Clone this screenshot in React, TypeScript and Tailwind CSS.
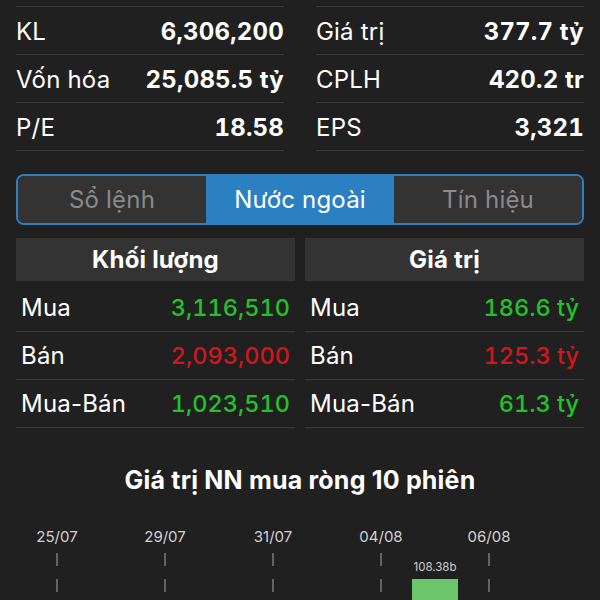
import React from "react";

const font = { fontFamily: "Inter, 'Noto Sans', sans-serif" };

function TopRow({ label, value }: { label: string; value: string }) {
  return (
    <div className="flex h-[48px] items-center justify-between border-b border-[#3a3a3a] pt-[2px]">
      <span className="text-[24px] tracking-[0.2px] text-white">{label}</span>
      <span className="text-[24px] font-bold tabular-nums tracking-[0.2px] text-white">{value}</span>
    </div>
  );
}

function DataRow({ label, value, color }: { label: string; value: string; color: string }) {
  return (
    <div className="flex h-[48px] items-center justify-between border-b border-[#3a3a3a] px-[5px]">
      <span className="text-[24px] tracking-[0.2px] text-white">{label}</span>
      <span className={`text-[23.5px] font-medium tabular-nums ${color}`}>{value}</span>
    </div>
  );
}

export default function App() {
  const dates = [
    { x: 57, t: "25/07" },
    { x: 165, t: "29/07" },
    { x: 273, t: "31/07" },
    { x: 381, t: "04/08" },
    { x: 489, t: "06/08" },
  ];
  return (
    <div className="h-[600px] w-[600px] overflow-hidden bg-[#202020]" style={font}>
      <div className="px-4 pt-[6px]">
        <div className="grid grid-cols-2 gap-x-8">
          <div className="border-t border-[#3a3a3a]">
            <TopRow label="KL" value="6,306,200" />
            <TopRow label="Vốn hóa" value="25,085.5 tỷ" />
            <TopRow label="P/E" value="18.58" />
          </div>
          <div className="border-t border-[#3a3a3a]">
            <TopRow label="Giá trị" value="377.7 tỷ" />
            <TopRow label="CPLH" value="420.2 tr" />
            <TopRow label="EPS" value="3,321" />
          </div>
        </div>

        <div className="mt-[23px] grid h-[51px] grid-cols-3 overflow-hidden rounded-[8px] border-2 border-[#2f7fbd]">
          <div className="flex items-center justify-center bg-[#333333] text-[24px] tracking-[0.2px] text-[#8a8a8a]">Sổ lệnh</div>
          <div className="flex items-center justify-center bg-[#2b80c2] text-[24px] tracking-[0.2px] text-white">Nước ngoài</div>
          <div className="flex items-center justify-center bg-[#333333] text-[24px] tracking-[0.2px] text-[#8a8a8a]">Tín hiệu</div>
        </div>

        <div className="mt-[13px] grid grid-cols-2 gap-x-[10px]">
          <div>
            <div className="flex h-[43px] items-center justify-center bg-[#333333] text-[24px] font-bold tracking-[0.2px] text-white">Khối lượng</div>
            <div className="mt-[3px]">
              <DataRow label="Mua" value="3,116,510" color="text-[#22c22a]" />
              <DataRow label="Bán" value="2,093,000" color="text-[#d3161b]" />
              <DataRow label="Mua-Bán" value="1,023,510" color="text-[#22c22a]" />
            </div>
          </div>
          <div>
            <div className="flex h-[43px] items-center justify-center bg-[#333333] text-[24px] font-bold tracking-[0.2px] text-white">Giá trị</div>
            <div className="mt-[3px]">
              <DataRow label="Mua" value="186.6 tỷ" color="text-[#22c22a]" />
              <DataRow label="Bán" value="125.3 tỷ" color="text-[#d3161b]" />
              <DataRow label="Mua-Bán" value="61.3 tỷ" color="text-[#22c22a]" />
            </div>
          </div>
        </div>
      </div>

      <div className="mt-[37px] text-center text-[25px] font-bold leading-[30px] tracking-[0.2px] text-white">
        Giá trị NN mua ròng 10 phiên
      </div>

      <svg width="600" height="110" className="mt-[12px] block">
        {dates.map((d) => (
          <g key={d.t}>
            <text x={d.x} y={35} textAnchor="middle" fontSize="15" fill="#d2d2d2" style={font}>
              {d.t}
            </text>
            <line x1={d.x} y1={46} x2={d.x} y2={110} stroke="#7a7a7a" strokeWidth="1.5" strokeDasharray="13 13" />
          </g>
        ))}
        <text x={435} y={64} textAnchor="middle" fontSize="11.5" fill="#cfcfcf" style={font}>
          108.38b
        </text>
        <rect x={412} y={72} width={46} height={60} fill="#6cc46b" />
      </svg>
    </div>
  );
}
